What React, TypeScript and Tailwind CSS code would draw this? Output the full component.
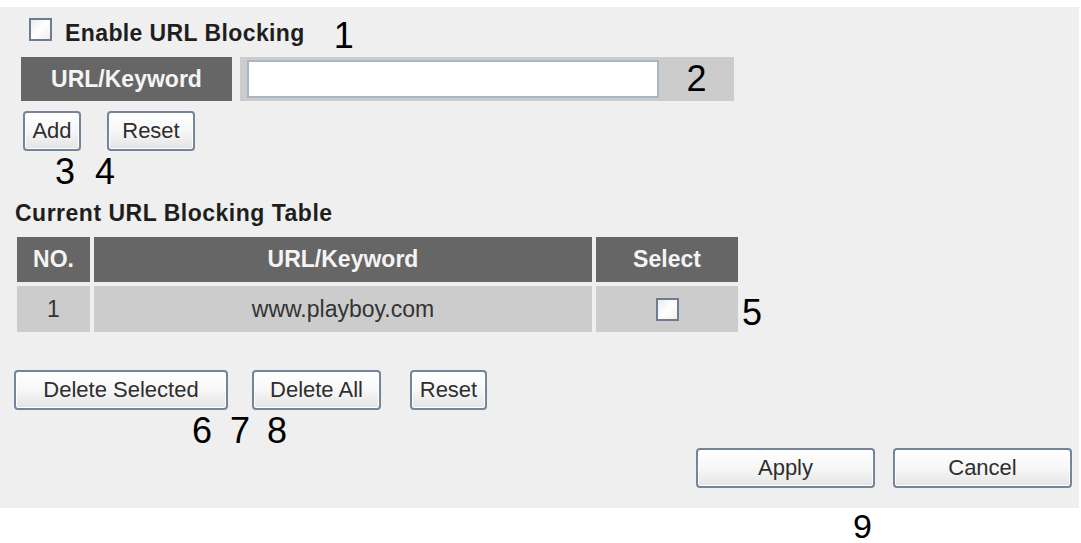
import React from 'react';

const font = { fontFamily: '"Liberation Sans", Arial, sans-serif' };

const btn =
  'h-[40px] rounded-[4px] border-2 border-[#74849a] bg-linear-to-b from-white via-[#f7f7f7] to-[#e4e4e4] text-[22px] leading-none text-[#2e2e2e] shadow-[inset_0_0_0_1px_#ffffff]';

const Box: React.FC = () => (
  <span className="inline-block w-[23px] h-[23px] border-2 border-[#6c7c95] bg-linear-to-br from-[#e9ecef] via-white to-[#f4ede8]" />
);

const Num: React.FC<{ children: React.ReactNode; className?: string }> = ({ children, className = '' }) => (
  <span className={`text-[36px] leading-none text-black ${className}`}>{children}</span>
);

export default function App() {
  return (
    <div className="w-[1081px] h-[543px] bg-white overflow-hidden" style={font}>
      <div className="mt-[7px] h-[501px] w-[1079px] bg-[#efefef] flex flex-col">
        {/* enable */}
        <div className="mt-[11px] h-[30px] flex items-center">
          <span className="ml-[29px]"><Box /></span>
          <span className="ml-[13px] text-[23px] font-bold tracking-[0.4px] text-[#1e1e1e]">Enable URL Blocking</span>
          <Num className="ml-[29px] mt-[6px]">1</Num>
        </div>

        {/* url input */}
        <div className="mt-[9px] h-[44px] flex">
          <div className="ml-[21px] w-[211px] bg-[#666666] flex items-center justify-center text-[23px] font-bold text-[#f4f4f4]">
            URL/Keyword
          </div>
          <div className="ml-[8px] w-[494px] bg-[#cccccc] flex items-center pl-[7px]">
            <input className="w-[412px] h-[38px] border-2 border-[#a9b6c4] bg-white outline-none" />
            <div className="flex-1 text-center"><Num>2</Num></div>
          </div>
        </div>

        {/* add / reset */}
        <div className="mt-[10px] h-[39px] flex">
          <button className={`${btn} h-[39px] ml-[23px] w-[58px]`}>Add</button>
          <button className={`${btn} h-[39px] ml-[26px] w-[88px]`}>Reset</button>
        </div>
        <div className="h-[38px] flex items-center">
          <Num className="ml-[55px] mt-[6px]">3</Num>
          <Num className="ml-[20px] mt-[6px]">4</Num>
        </div>

        {/* table */}
        <div className="mt-[8px] h-[34px] flex items-center pl-[15px] text-[23px] font-bold tracking-[0.5px] text-[#1e1e1e]">
          Current URL Blocking Table
        </div>
        <div className="mt-[7px] ml-[17px] h-[95px] flex items-start">
          <div className="w-[721px] grid grid-cols-[73px_498px_142px] gap-x-[4px] gap-y-[4px]">
            <div className="h-[45px] bg-[#666666] flex items-center justify-center text-[23px] font-bold text-[#f4f4f4]">NO.</div>
            <div className="h-[45px] bg-[#666666] flex items-center justify-center text-[23px] font-bold text-[#f4f4f4]">URL/Keyword</div>
            <div className="h-[45px] bg-[#666666] flex items-center justify-center text-[23px] font-bold text-[#f4f4f4]">Select</div>
            <div className="h-[46px] bg-[#cccccc] flex items-center justify-center text-[23px] text-[#333333]">1</div>
            <div className="h-[46px] bg-[#cccccc] flex items-center justify-center text-[23px] text-[#333333]">www.playboy.com</div>
            <div className="h-[46px] bg-[#cccccc] flex items-center justify-center"><Box /></div>
          </div>
          <Num className="ml-[4px] mt-[58px]">5</Num>
        </div>

        {/* delete buttons */}
        <div className="mt-[38px] h-[40px] flex">
          <button className={`${btn} ml-[14px] w-[214px]`}>Delete Selected</button>
          <button className={`${btn} ml-[24px] w-[129px]`}>Delete All</button>
          <button className={`${btn} ml-[29px] w-[77px]`}>Reset</button>
        </div>
        <div className="h-[38px] flex items-center">
          <Num className="ml-[192px] mt-[4px]">6</Num>
          <Num className="ml-[18px] mt-[4px]">7</Num>
          <Num className="ml-[17px] mt-[4px]">8</Num>
        </div>

        {/* apply */}
        <div className="h-[40px] flex">
          <button className={`${btn} ml-[696px] w-[179px]`}>Apply</button>
          <button className={`${btn} ml-[18px] w-[179px]`}>Cancel</button>
        </div>
      </div>
      <div className="h-[35px] flex items-center">
        <span className="ml-[853px] text-[34px] leading-[34px] text-black">9</span>
      </div>
    </div>
  );
}
